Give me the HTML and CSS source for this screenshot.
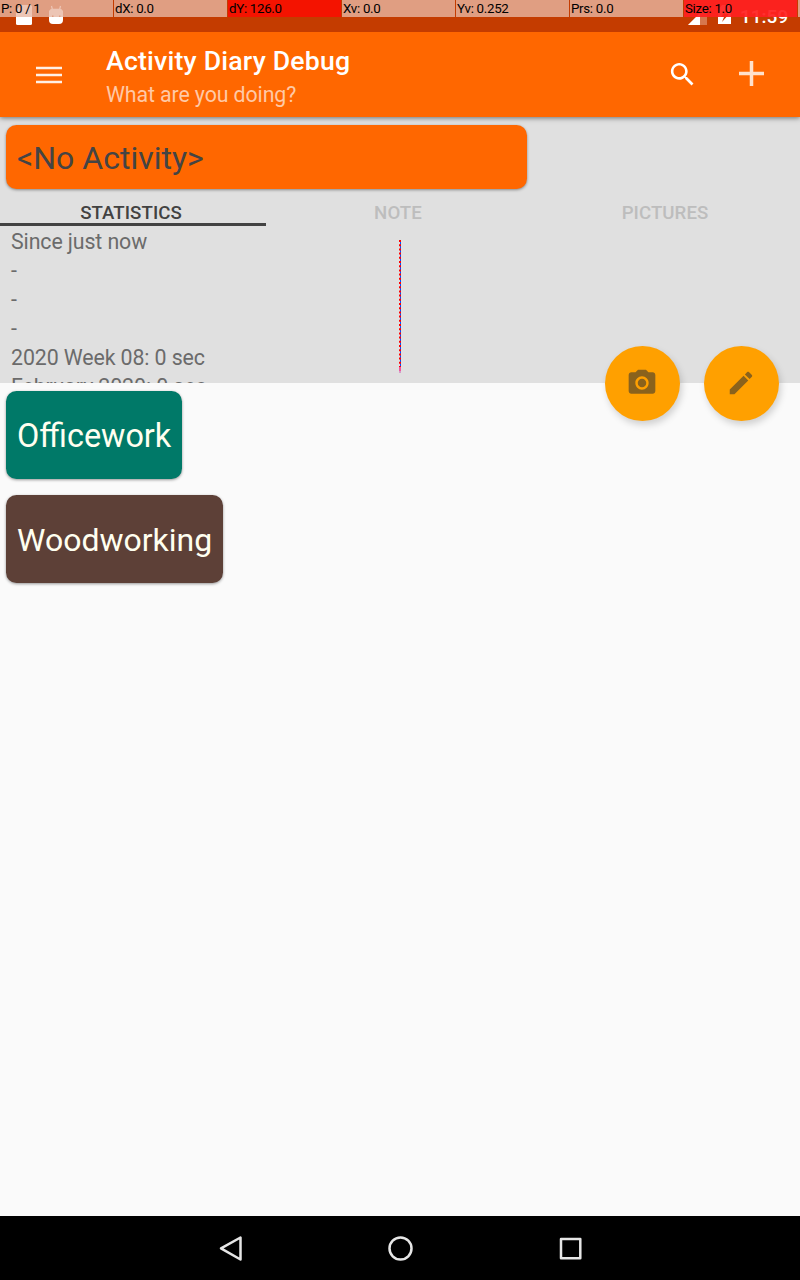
FILE: index.html
```html
<!DOCTYPE html>
<html lang="en">
<head>
<meta charset="utf-8">
<title>Activity Diary Debug</title>
<link rel="stylesheet" href="styles.css">
</head>
<body>
<div class="screen">
  <div class="status-bar">
    <div class="status-left">
      <svg width="16" height="20" viewBox="0 0 16 20"><path d="M5 0h9.500q1.500 0 1.500 1.500v17q0 1.500-1.500 1.500h-13q-1.500 0-1.500-1.500V5z" fill="#fff"/></svg>
      <svg width="16" height="20" viewBox="0 0 16 20"><path d="M3.500 1l1 4M12.500 1l-1 4" stroke="#fff" stroke-width="1.200"/><path fill-rule="evenodd" d="M1 6Q2 3.800 5 3.800h6q3 0 4 2.200v9q0 4-4 4H5q-4 0-4-4zM4 10.500v1.500H5.500v-1.500zm7 0v1.500h1.500v-1.500z" fill="#fff"/></svg>
    </div>
    <div class="status-right">
      <svg width="20" height="20" viewBox="0 0 20 20"><path d="M19 1v19H0z" fill="#fff" opacity=".3"/><path d="M12 8v12H0z" fill="#fff"/></svg>
      <svg width="13" height="20" viewBox="0 0 13 20"><path fill-rule="evenodd" d="M4 0h9v19H0V5zM8 5l-5 7h3l-2 5 7-8H7z" fill="#fff"/></svg>
      <span class="clock">11:59</span>
    </div>
    <div class="pointer-info">
      <span>P: 0 / 1</span><span>dX: 0.0</span><span class="hot">dY: 126.0</span><span>Xv: 0.0</span><span>Yv: 0.252</span><span>Prs: 0.0</span><span class="hot hot-size">Size: 1.0</span><span></span>
    </div>
  </div>
  <header class="app-bar">
    <svg class="menu" width="26" height="18" viewBox="0 0 26 18"><path d="M0 2h26M0 9h26M0 16h26" stroke="#fff" stroke-opacity=".9" stroke-width="2.700"/></svg>
    <div class="titles">
      <h1>Activity Diary Debug</h1>
      <p>What are you doing?</p>
    </div>
    <svg class="search" width="31" height="31" viewBox="0 0 24 24" fill="#fff"><path d="M15.500 14h-.79l-.28-.27C15.410 12.590 16 11.110 16 9.500 16 5.910 13.090 3 9.500 3S3 5.910 3 9.500 5.910 16 9.500 16c1.610 0 3.090-.59 4.230-1.570l.27.28v.79l5 4.990L20.490 19l-4.990-5zm-6 0C7.010 14 5 11.990 5 9.500S7.010 5 9.500 5 14 7.010 14 9.500 11.990 14 9.500 14z"/></svg>
    <svg class="add" width="25" height="25" viewBox="0 0 25 25"><path d="M12.500 0v25M0 12.500h25" stroke="#ffe1cc" stroke-width="3.500"/></svg>
  </header>
  <section class="detail">
    <div class="card current">&lt;No Activity&gt;</div>
    <nav class="tabs"><span class="tab active">STATISTICS</span><span class="tab">NOTE</span><span class="tab">PICTURES</span></nav>
    <div class="stats">
      <div>Since just now</div><div>-</div><div>-</div><div>-</div><div>2020 Week 08: 0 sec</div><div>February 2020: 0 sec</div>
    </div>
    <svg class="trace" width="4" height="135" viewBox="0 0 4 135"><path d="M2.500 1v126" stroke="#0050ff"/><path d="M2 0v127" stroke="#f00" stroke-width="2" stroke-dasharray="2 2.200"/><path d="M2 127v4" stroke="#f0569c" stroke-width="2"/><path d="M2 131v2" stroke="#d79bc8" stroke-width="2"/></svg>
    <div class="fabs">
      <div class="fab"><svg width="32" height="32" viewBox="0 0 24 24" fill="#8a621c"><circle cx="12" cy="12" r="3.200"/><path d="M9 2L7.170 4H4c-1.100 0-2 .9-2 2v12c0 1.100.9 2 2 2h16c1.100 0 2-.9 2-2V6c0-1.100-.9-2-2-2h-3.170L15 2H9zm3 15c-2.760 0-5-2.240-5-5s2.240-5 5-5 5 2.240 5 5-2.240 5-5 5z"/></svg></div>
      <div class="fab"><svg width="30" height="30" viewBox="0 0 24 24" fill="#8a621c"><path d="M3 17.250V21h3.750L17.810 9.940l-3.750-3.750L3 17.250zM20.710 7.040c.39-.39.39-1.020 0-1.410l-2.340-2.340c-.39-.39-1.020-.39-1.410 0l-1.830 1.830 3.750 3.750 1.830-1.830z"/></svg></div>
    </div>
  </section>
  <main class="activities">
    <div class="card office">Officework</div>
    <div class="card wood">Woodworking</div>
  </main>
  <footer class="nav-bar">
    <svg width="28" height="28" viewBox="0 0 28 28"><path d="M5 14.300L24.500 3.500v22z"/></svg>
    <svg width="28" height="28" viewBox="0 0 28 28"><circle cx="14.500" cy="14.500" r="11"/></svg>
    <svg width="28" height="28" viewBox="0 0 28 28"><path d="M5 5h19.300v19.300H5z"/></svg>
  </footer>
</div>
</body>
</html>
```

FILE: styles.css
```css
* { box-sizing: border-box; }
body { margin: 0; font-family: Roboto, "Liberation Sans", sans-serif; }
svg { display: block; flex: none; }
.screen { width: 800px; height: 1280px; display: flex; flex-direction: column; background: #fafafa; overflow: hidden; }
.status-bar { position: relative; z-index: 2; height: 32px; flex: none; display: flex; justify-content: space-between; background: #c43c00; padding: 0 11px 0 16px; }
.status-left { display: flex; gap: 16px; padding-top: 5px; }
.status-right { display: flex; padding-top: 5px; }
.status-right svg:nth-child(2) { margin-left: 10px; }
.clock { margin-left: 9px; color: #fff; font-size: 19px; font-weight: 500; line-height: 24px; width: 49px; white-space: nowrap; }
.pointer-info { position: absolute; top: 0; left: 0; width: 800px; height: 17px; display: flex; gap: 1px; overflow: hidden; }
.pointer-info span { flex: none; width: 113px; height: 17px; padding-left: 1px; background: rgba(231, 182, 162, .8); font-size: 13.300px; letter-spacing: -.3px; line-height: 17px; white-space: nowrap; }
.pointer-info .hot { background: #f41300; }
.pointer-info .hot-size { background: rgba(255, 32, 32, .93); }
.app-bar { position: relative; z-index: 1; height: 85px; flex: none; display: flex; align-items: flex-start; background: #ff6700; box-shadow: 0 1px 5px rgba(0, 0, 0, .5); }
.menu { margin: 34px 0 0 36px; }
.titles { margin: 13px 0 0 44px; width: 560px; }
.titles h1 { margin: 0; color: #fff; font-size: 26.670px; letter-spacing: .2px; line-height: 32px; font-weight: 500; }
.titles p { margin: 4px 0 0; color: #ffc9a6; font-size: 21.330px; letter-spacing: -.1px; line-height: 27px; }
.search { margin: 27px 0 0 1px; }
.add { margin: 29px 0 0 41px; }
.detail { position: relative; height: 266px; flex: none; padding-top: 8px; background: #e0e0e0; }
.card { margin-left: 6px; padding-left: 11px; border-radius: 10.500px; font-size: 32px; box-shadow: 0 1px 3px rgba(0, 0, 0, .4); white-space: nowrap; }
.current { width: 521px; height: 64px; line-height: 66px; background: #ff6700; color: #444; }
.tabs { height: 37px; display: grid; grid-template-columns: repeat(3, 266px); column-gap: 1px; }
.tab { height: 37px; padding: 12px 4px 0 0; text-align: center; color: #bdbdbd; font-size: 18.670px; letter-spacing: .05px; line-height: 24px; font-weight: 500; }
.tab.active { height: 36.500px; color: #424242; background: linear-gradient(#424242, #424242) 0 34px / 100% 3px no-repeat; }
.tabs .tab.active { height: 37px; }
.stats { height: 157px; overflow: hidden; padding: 1px 0 0 11px; color: #6b6b6b; font-size: 21.330px; letter-spacing: -.1px; line-height: 29px; }
.stats div { padding-top: 1px; height: 29px; line-height: 28px; }
.trace { position: absolute; left: 398px; top: 123px; }
.fabs { position: absolute; left: 605px; top: 229px; display: flex; gap: 24px; }
.fab { width: 75px; height: 75px; padding: 0 2px 2px 0; border-radius: 50%; background: #ffa000; display: grid; place-items: center; box-shadow: 2px 4px 7px rgba(0, 0, 0, .17); }
.activities { flex: 1; padding-top: 8px; }
.office, .wood { height: 88px; line-height: 90px; color: #fffff0; }
.office { width: 176px; font-size: 32.400px; background: #007968; }
.wood { width: 217px; margin-top: 16px; background: #5d4037; }
.nav-bar { height: 64px; flex: none; display: flex; justify-content: center; gap: 142px; padding-top: 18px; background: #000; }
.nav-bar svg { fill: none; stroke: #e6e6e6; stroke-width: 2.500; stroke-linejoin: round; }
```
